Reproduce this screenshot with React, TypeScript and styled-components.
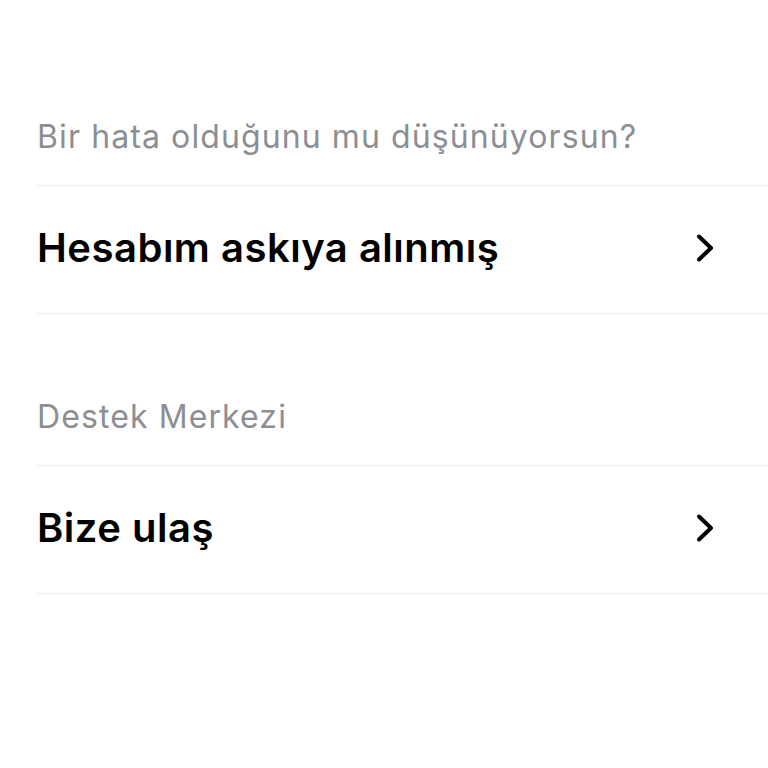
import styled, { createGlobalStyle } from "styled-components"

const GlobalStyle = createGlobalStyle`
  html, body {
    margin: 0;
    padding: 0;
    background: #fff;
  }
  body {
    font-family: Inter, "Noto Sans", "Liberation Sans", sans-serif;
    -webkit-font-smoothing: antialiased;
  }
`

interface LinkItem {
  label: string
}

interface Section {
  title: string
  items: LinkItem[]
}

const sections: Section[] = [
  { title: "Bir hata olduğunu mu düşünüyorsun?", items: [{ label: "Hesabım askıya alınmış" }] },
  { title: "Destek Merkezi", items: [{ label: "Bize ulaş" }] },
]

function Chevron() {
  return (
    <svg width="18" height="30" viewBox="0 0 18 30" fill="none">
      <polyline
        points="3,3.5 15,15 3,26.5"
        stroke="#000"
        strokeWidth="4"
        strokeLinecap="round"
        strokeLinejoin="round"
      />
    </svg>
  )
}

export default function App() {
  return <>
    <GlobalStyle />
    <Page>
      {sections.map((section, i) => (
        <SectionWrap key={section.title} $first={i === 0}>
          <SectionTitle>{section.title}</SectionTitle>
          <List>
            {section.items.map(item => (
              <Row key={item.label}>
                <RowLabel>{item.label}</RowLabel>
                <RowIcon><Chevron /></RowIcon>
              </Row>
            ))}
          </List>
        </SectionWrap>
      ))}
    </Page>
  </>
}

const Page = styled.div`
  width: 768px;
  min-height: 768px;
  padding-left: 37px;
  box-sizing: border-box;
  display: flex;
  flex-direction: column;
`

const SectionWrap = styled.section<{ $first?: boolean }>`
  margin-top: ${p => (p.$first ? "117px" : "83px")};
`

const SectionTitle = styled.div`
  font-size: 32px;
  line-height: 40px;
  font-weight: 400;
  color: #8b8e93;
  padding-bottom: 28px;
  letter-spacing: 1.1px;
`

const List = styled.div`
  border-top: 1px solid #ededed;
`

const Row = styled.div`
  display: flex;
  align-items: center;
  justify-content: space-between;
  height: 128px;
  padding-right: 54px;
  padding-bottom: 4px;
  box-sizing: border-box;
  border-bottom: 1px solid #ededed;
`

const RowLabel = styled.span`
  font-size: 40px;
  line-height: 48px;
  font-weight: 600;
  letter-spacing: 0.5px;
  color: #000;
`

const RowIcon = styled.span`
  display: flex;
  align-items: center;
`
